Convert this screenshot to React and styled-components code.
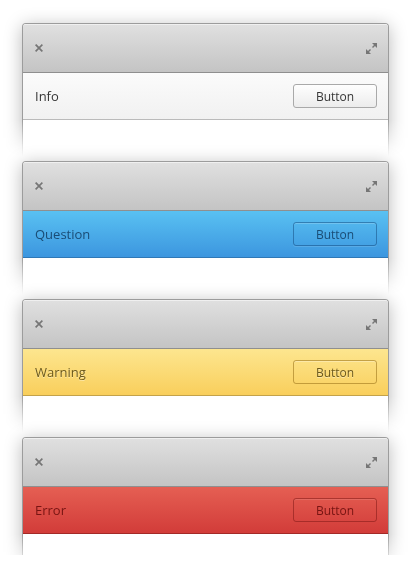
import React from 'react';
import styled, { createGlobalStyle, css } from 'styled-components';

const GlobalStyle = createGlobalStyle`
  html, body {
    margin: 0;
    padding: 0;
    background: #ffffff;
    overflow: hidden;
  }
  body {
    font-family: "Open Sans", "DejaVu Sans", sans-serif;
  }
`;

const kinds = {
  info: {
    bg: 'linear-gradient(to bottom, #fbfbfb, #f1f1f1)',
    line: '#bababa',
    text: '#363636',
    btnBg: 'linear-gradient(to bottom, #fefefe, #ececec)',
    btnBorder: '#a9a9a9',
    btnShadow: 'none',
  },
  question: {
    bg: 'linear-gradient(to bottom, #59c1f2, #3c96df)',
    line: '#2f78b6',
    text: '#1a4c75',
    btnBg: 'transparent',
    btnBorder: 'rgba(10, 60, 110, 0.45)',
    btnShadow: 'inset 0 1px 0 rgba(255,255,255,0.18), 0 1px 0 rgba(255,255,255,0.12)',
  },
  warning: {
    bg: 'linear-gradient(to bottom, #fde68f, #f9cf5c)',
    line: '#c3a24a',
    text: '#6d5a1b',
    btnBg: 'transparent',
    btnBorder: 'rgba(150, 110, 20, 0.55)',
    btnShadow: 'inset 0 1px 0 rgba(255,255,255,0.3)',
    glow: '0 1px 0 rgba(255,255,255,0.4)',
  },
  error: {
    bg: 'linear-gradient(to bottom, #e55f53, #d23c39)',
    line: '#a32a27',
    text: '#761412',
    btnBg: 'transparent',
    btnBorder: 'rgba(120, 20, 18, 0.5)',
    btnShadow: 'inset 0 1px 0 rgba(255,255,255,0.12)',
  },
};

const Stack = styled.div`
  display: flex;
  flex-direction: column;
  padding: 3px 0 0 22px;
`;

// room around each window for its shadow; the bottom fades out
const Slot = styled.div`
  padding: 20px 20px 0;
  margin: 0 -20px -15px;
  width: 367px;
  -webkit-mask-image: linear-gradient(to bottom, #000 0, #000 calc(100% - 36px), transparent 100%);
  mask-image: linear-gradient(to bottom, #000 0, #000 calc(100% - 36px), transparent 100%);
`;

const Window = styled.div`
  display: flex;
  flex-direction: column;
  width: 367px;
  box-sizing: border-box;
  border: 1px solid #9c9c9c;
  border-bottom: none;
  border-radius: 4px 4px 0 0;
  background: #ffffff;
  box-shadow: 0 3px 18px rgba(0, 0, 0, 0.28);
  overflow: hidden;
`;

const TitleBar = styled.div`
  height: 48px;
  display: flex;
  align-items: center;
  justify-content: space-between;
  padding: 0 11px 0 10px;
  background: linear-gradient(to bottom, #e0e0e0, #c4c4c4);
  border-bottom: 1px solid #8f8f8f;
  box-shadow: inset 0 1px 0 rgba(255, 255, 255, 0.5);
`;

const IconButton = styled.span`
  display: flex;
  width: 12px;
  height: 12px;
  align-items: center;
  justify-content: center;
  color: #767676;
`;

const InfoBar = styled.div`
  height: 46px;
  display: flex;
  align-items: center;
  justify-content: space-between;
  padding: 0 11px 0 12px;
  background: ${p => kinds[p.$kind].bg};
  border-bottom: 1px solid ${p => kinds[p.$kind].line};
`;

const Message = styled.span`
  font-size: 13px;
  color: ${p => kinds[p.$kind].text};
  ${p => kinds[p.$kind].glow && css`text-shadow: ${kinds[p.$kind].glow};`}
`;

const BarButton = styled.button`
  width: 84px;
  height: 24px;
  box-sizing: border-box;
  padding: 0;
  border-radius: 3px;
  font-family: "Open Sans", "DejaVu Sans", sans-serif;
  font-size: 12px;
  color: ${p => kinds[p.$kind].text};
  background: ${p => kinds[p.$kind].btnBg};
  border: 1px solid ${p => kinds[p.$kind].btnBorder};
  box-shadow: ${p => kinds[p.$kind].btnShadow};
  ${p => kinds[p.$kind].glow && css`text-shadow: ${kinds[p.$kind].glow};`}
`;

const Body = styled.div`
  height: 36px;
  background: #ffffff;
`;

const CloseIcon = () => (
  <svg width="8" height="8" viewBox="0 0 8 8">
    <path d="M1.2 1.2 L6.8 6.8 M6.8 1.2 L1.2 6.8" stroke="currentColor" strokeWidth="1.7" strokeLinecap="square" />
  </svg>
);

const ExpandIcon = () => (
  <svg width="11" height="11" viewBox="0 0 11 11">
    <polygon points="6,0 11,0 11,5" fill="currentColor" />
    <path d="M6.5 4.5 L9 2" stroke="currentColor" strokeWidth="1.4" />
    <polygon points="0,6 0,11 5,11" fill="currentColor" />
    <path d="M2 9 L4.5 6.5" stroke="currentColor" strokeWidth="1.4" />
  </svg>
);

const bars = [
  { kind: 'info', label: 'Info' },
  { kind: 'question', label: 'Question' },
  { kind: 'warning', label: 'Warning' },
  { kind: 'error', label: 'Error' },
];

export default function App() {
  return (
    <>
      <GlobalStyle />
      <Stack>
        {bars.map(b => (
          <Slot key={b.kind}>
            <Window>
              <TitleBar>
                <IconButton><CloseIcon /></IconButton>
                <IconButton><ExpandIcon /></IconButton>
              </TitleBar>
              <InfoBar $kind={b.kind}>
                <Message $kind={b.kind}>{b.label}</Message>
                <BarButton $kind={b.kind}>Button</BarButton>
              </InfoBar>
              <Body />
            </Window>
          </Slot>
        ))}
      </Stack>
    </>
  );
}
